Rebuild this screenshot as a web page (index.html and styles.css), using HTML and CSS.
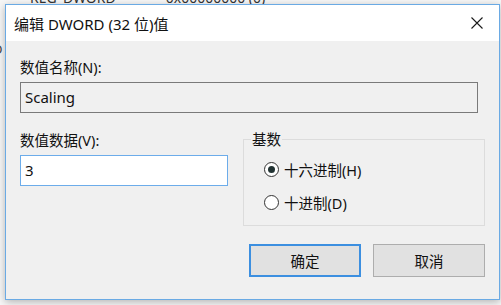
FILE: index.html
```html
<!DOCTYPE html>
<html lang="zh-CN">
<head>
<meta charset="utf-8">
<link rel="stylesheet" href="styles.css">
</head>
<body>
<div class="backdrop">
  <div class="bg-row">
    <span class="bg-type">REG_DWORD</span>
    <span class="bg-val">0x00000000 (0)</span>
  </div>
  <div class="bg-left">D</div>
</div>
<div class="dialog">
  <div class="titlebar">
    <span class="title">编辑 DWORD (32 位)值</span>
    <svg class="close" width="12" height="12" viewBox="0 0 12 12"><path d="M0.5 0.5 L11.5 11.5 M11.5 0.5 L0.5 11.5" stroke="#1a1a1a" stroke-width="1.1" fill="none"/></svg>
  </div>
  <div class="content">
    <div class="label label-n">数值名称(N):</div>
    <div class="namebox">Scaling</div>
    <div class="lower">
      <div class="datacol">
        <div class="label">数值数据(V):</div>
        <div class="datainput">3</div>
      </div>
      <fieldset class="group">
        <legend>基数</legend>
        <div class="radio-row first"><span class="radio checked"></span><span>十六进制(H)</span></div>
        <div class="radio-row"><span class="radio"></span><span>十进制(D)</span></div>
      </fieldset>
    </div>
    <div class="buttons">
      <div class="btn default">确定</div>
      <div class="btn">取消</div>
    </div>
  </div>
</div>
</body>
</html>
```
FILE: styles.css
```css
html, body {
  margin: 0;
  padding: 0;
}
body {
  width: 501px;
  height: 305px;
  overflow: hidden;
  position: relative;
  background: #eeeeee;
  font-family: "Noto Sans", "Noto Sans CJK SC", sans-serif;
  color: #111111;
}
.backdrop {
  position: absolute;
  left: 0;
  top: 0;
  width: 501px;
  height: 305px;
  background: #f7f7f7;
}
.bg-row {
  position: absolute;
  top: -9px;
  left: 30px;
  font-size: 14px;
  line-height: 14px;
  color: #333;
  display: flex;
  gap: 50px;
}
.bg-left {
  position: absolute;
  left: -7px;
  top: 40px;
  font-size: 13px;
  color: #444;
}
.dialog {
  position: absolute;
  left: 5px;
  top: 4px;
  width: 493px;
  height: 294px;
  border: 1px solid #6aaae4;
  background: #f0f0f0;
  box-shadow: 0 2px 8px rgba(0, 0, 0, 0.28);
  display: flex;
  flex-direction: column;
}
.titlebar {
  height: 36px;
  background: #ffffff;
  display: flex;
  align-items: center;
  justify-content: space-between;
  padding: 0 16px 0 8px;
  flex: none;
}
.title {
  font-size: 15px;
  color: #111111;
}
.close {
  display: block;
}
.content {
  padding: 17px 14px 0 14px;
  font-size: 14.5px;
}
.label {
  line-height: 18px;
  height: 18px;
}
.namebox {
  margin-top: 6px;
  width: 458px;
  box-sizing: border-box;
  height: 31px;
  border: 1px solid #7a7a7a;
  background: #f0f0f0;
  line-height: 29px;
  padding-left: 4px;
  font-size: 15px;
}
.lower {
  display: flex;
  align-items: flex-start;
  margin-top: 18px;
}
.datacol {
  width: 208px;
  flex: none;
}
.datainput {
  margin-top: 6px;
  box-sizing: border-box;
  height: 31px;
  border: 1px solid #6cacea;
  background: #ffffff;
  line-height: 29px;
  padding-left: 4px;
  font-size: 15px;
}
.group {
  margin: -1px 0 0 15px;
  width: 242px;
  box-sizing: border-box;
  height: 96px;
  border: 1px solid #dcdcdc;
  padding: 0 0 0 7px;
  min-inline-size: 0;
}
.group legend {
  padding: 0 1px;
  line-height: 18px;
  font-size: 14.5px;
}
.radio-row {
  display: flex;
  align-items: center;
  gap: 5px;
  height: 18px;
  margin-left: 13px;
  font-size: 14.5px;
}
.radio-row.first {
  margin-top: 12px;
}
.radio-row + .radio-row {
  margin-top: 15px;
}
.radio {
  width: 15px;
  height: 15px;
  box-sizing: border-box;
  border: 1px solid #333333;
  border-radius: 50%;
  background: #ffffff;
  position: relative;
  flex: none;
}
.radio.checked::after {
  content: "";
  position: absolute;
  left: 3px;
  top: 3px;
  width: 7px;
  height: 7px;
  border-radius: 50%;
  background: #223333;
}
.buttons {
  display: flex;
  justify-content: flex-end;
  gap: 12px;
  margin-top: 18px;
}
.btn {
  width: 112px;
  height: 33px;
  box-sizing: border-box;
  border: 1px solid #adadad;
  background: #e1e1e1;
  display: flex;
  align-items: center;
  justify-content: center;
  font-size: 14.5px;
}
.btn.default {
  border: 2px solid #3c8fe0;
}
```
